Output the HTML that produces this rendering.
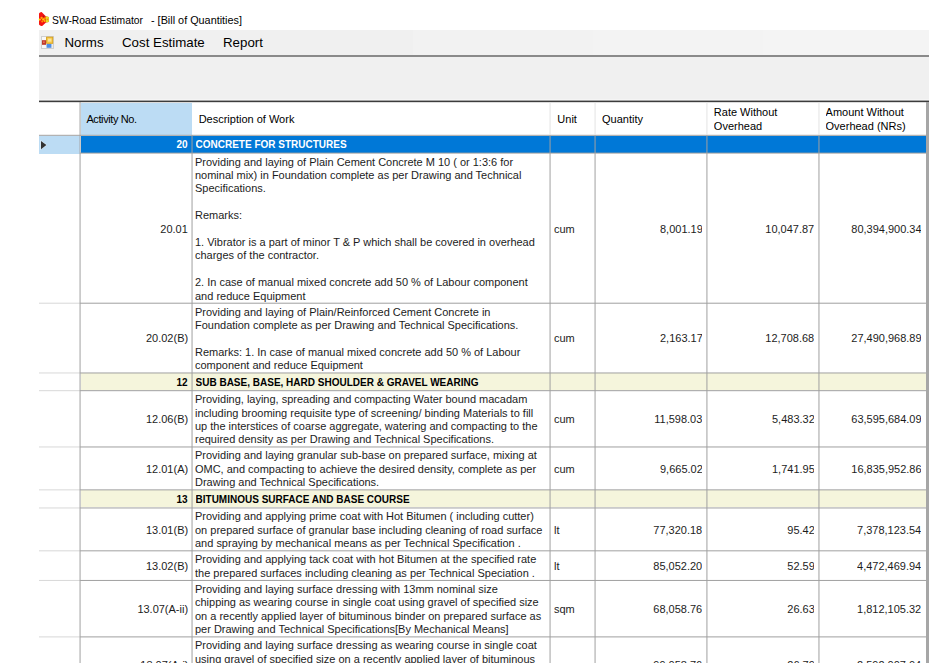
<!DOCTYPE html>
<html><head><meta charset="utf-8"><style>
html,body{margin:0;padding:0;background:#fff;}
body{width:936px;height:666px;position:relative;overflow:hidden;font-family:"Liberation Sans", sans-serif;color:#000;}
.a{position:absolute;}
.t{position:absolute;white-space:nowrap;font-size:11px;line-height:13.4px;}
.cell{position:absolute;display:flex;align-items:center;overflow:hidden;}
.r{justify-content:flex-end;}
.b{font-weight:bold;font-size:10px;padding-top:2px;box-sizing:border-box}
.s{font-size:var(--fs);line-height:13.4px;white-space:nowrap;transform:scaleX(var(--sx));transform-origin:left center;position:relative;top:var(--dy)}
.sr{transform-origin:right center}
body{--fs:11.5px;--sx:0.955;--dy:1.1px}
.s{color:#1c1c1c}
</style></head><body>

<svg class="a" style="left:37px;top:10px" width="14" height="18" viewBox="0 0 14 18">
<path d="M2 3.6 Q2.6 2 4.6 2 L8.8 6.2 L11.8 7 L11.8 12 L9 12.6 L5.2 16 Q3 16.4 2 14.6 Z" fill="#f41414"/>
<path d="M8.6 6.3 L11.8 7 L11.8 12 L8.8 12.5 Z" fill="#dce62a"/>
<rect x="9.6" y="8.6" width="1.6" height="1.6" fill="#f08a10"/>
<circle cx="2.8" cy="9.6" r="1.1" fill="#ffe000"/>
<circle cx="4.6" cy="7.8" r="1.1" fill="#ffb000"/>
<circle cx="6.4" cy="9.4" r="1.2" fill="#ffd000"/>
<circle cx="8" cy="8.2" r="0.9" fill="#ff9a00"/>
<circle cx="5.2" cy="11.6" r="1" fill="#ff9000"/>
<circle cx="7.6" cy="11" r="0.9" fill="#ffc000"/>
<circle cx="6.6" cy="6.2" r="0.8" fill="#902020"/>
</svg>
<div class="a" style="left:52.4px;top:12.5px;font-size:11.6px;line-height:14px;white-space:pre;color:#000;transform:scaleX(0.89);transform-origin:left center">SW-Road Estimator</div>
<div class="a" style="left:151.2px;top:12.5px;font-size:11.6px;line-height:14px;white-space:pre;color:#000;transform:scaleX(0.935);transform-origin:left center">- [Bill of Quantities]</div>
<div class="a" style="left:39px;top:30px;width:374px;height:25px;background:#f0f0f0"></div>
<div class="a" style="left:413px;top:30px;width:180px;height:25px;background:#f2f2f2"></div>
<div class="a" style="left:593px;top:30px;width:170px;height:25px;background:#f3f3f3"></div>
<div class="a" style="left:763px;top:30px;width:166px;height:25px;background:#f4f4f4"></div>
<div class="a" style="left:39px;top:55px;width:890px;height:2px;background:#8a8a8a"></div>
<svg class="a" style="left:41px;top:36px" width="13" height="13" viewBox="0 0 13 13">
<rect x="0.5" y="0.5" width="12" height="12" fill="#ececec" stroke="#cfcfcf" stroke-width="1"/>
<rect x="1" y="1" width="4" height="3.2" fill="#f8f8f8"/>
<rect x="1" y="4.2" width="4" height="4.6" fill="#c03a2b"/>
<rect x="2.2" y="5.4" width="1.4" height="1.6" fill="#e88070"/>
<rect x="1" y="9" width="4" height="3" fill="#f8f8f8"/>
<rect x="5.6" y="1.1" width="6.2" height="6.2" fill="#f6c847" stroke="#d49a10" stroke-width="0.8"/>
<rect x="7" y="2.6" width="3.4" height="3" fill="#fbe39a"/>
<rect x="5.6" y="8" width="4.8" height="3.8" fill="#4f8fe6"/>
</svg>
<div class="a" style="left:64.4px;top:35px;font-size:13.3px;line-height:16px;white-space:pre;color:#000">Norms</div>
<div class="a" style="left:122px;top:35px;font-size:13.3px;line-height:16px;white-space:pre;color:#000">Cost Estimate</div>
<div class="a" style="left:223px;top:35px;font-size:13.3px;line-height:16px;white-space:pre;color:#000">Report</div>
<div class="a" style="left:39px;top:57px;width:890px;height:45px;background:#f0f0f0"></div>
<div class="a" style="left:39px;top:99px;width:890px;height:1px;background:#f5f5f5"></div>
<div class="a" style="left:39px;top:100px;width:890px;height:1px;background:#a8a8a8"></div>
<div class="a" style="left:39px;top:101px;width:890px;height:1px;background:#3c3c3c"></div>
<div class="a" style="left:39px;top:102px;width:890px;height:1px;background:#dcdcdc"></div>
<div class="a" style="left:80.6px;top:102.6px;width:111.44px;height:32.2px;background:#bcdcf4"></div>
<div class="cell" style="left:86.4px;top:103px;width:100px;height:33.3px;font-size:11px;line-height:13.4px;letter-spacing:-0.4px">Activity No.</div>
<div class="cell" style="left:198.64px;top:103px;width:120px;height:33.3px;font-size:11px;line-height:13.4px;white-space:nowrap">Description of Work</div>
<div class="cell" style="left:557.36px;top:103px;width:120px;height:33.3px;font-size:11px;line-height:13.4px;white-space:nowrap">Unit</div>
<div class="cell" style="left:602.06px;top:103px;width:120px;height:33.3px;font-size:11px;line-height:13.4px;white-space:nowrap">Quantity</div>
<div class="cell" style="left:713.83px;top:103px;width:120px;height:33.3px;font-size:11px;line-height:13.4px;white-space:nowrap">Rate Without<br>Overhead</div>
<div class="cell" style="left:825.56px;top:103px;width:120px;height:33.3px;font-size:11px;line-height:13.4px;white-space:nowrap">Amount Without<br>Overhead (NRs)</div>
<div class="a" style="left:39.0px;top:135.8px;width:40.56px;height:17.8px;background:#bcdcf4"></div>
<div class="a" style="left:80.56px;top:135.8px;width:845.44px;height:16.8px;background:#0078d7"></div>
<svg class="a" style="left:40px;top:140px" width="9" height="11" viewBox="0 0 9 11"><path d="M0.3 0 L7.2 5 L0.3 10 Z" fill="#ffffff" opacity="0.55"/><path d="M1 1 L6.4 5 L1 9.2 Z" fill="#333333"/></svg>
<div class="cell r b" style="left:80.06px;top:135.8px;width:107.48px;height:16.8px;color:#fff;padding-top:0">20</div>
<div class="cell b" style="left:195.54px;top:135.8px;width:354.02px;height:16.8px;color:#fff;white-space:nowrap;padding-top:0">CONCRETE FOR STRUCTURES</div>
<div class="cell r" style="left:80.06px;top:153.6px;width:107.98px;height:149.1px"><div class="s sr">20.01</div></div>
<div class="cell" style="left:195.04px;top:153.6px;width:354.02px;height:149.1px"><div class="s">Providing and laying of Plain Cement Concrete M 10 ( or 1:3:6 for<br>nominal mix) in Foundation complete as per Drawing and Technical<br>Specifications.<br>&nbsp;<br>Remarks:<br>&nbsp;<br>1. Vibrator is a part of minor T &amp; P which shall be covered in overhead<br>charges of the contractor.<br>&nbsp;<br>2. In case of manual mixed concrete add 50 % of Labour component<br>and reduce Equipment</div></div>
<div class="cell" style="left:553.96px;top:153.6px;width:40px;height:149.1px"><div class="s">cum</div></div>
<div class="cell r" style="left:595.06px;top:153.6px;width:107.37px;height:149.1px"><div class="s sr">8,001.19</div></div>
<div class="cell r" style="left:706.93px;top:153.6px;width:107.53px;height:149.1px"><div class="s sr">10,047.87</div></div>
<div class="cell r" style="left:818.96px;top:153.6px;width:102.54px;height:149.1px"><div class="s sr">80,394,900.34</div></div>
<div class="cell r" style="left:80.06px;top:303.7px;width:107.98px;height:68.77px"><div class="s sr">20.02(B)</div></div>
<div class="cell" style="left:195.04px;top:303.7px;width:354.02px;height:68.77px"><div class="s">Providing and laying of Plain/Reinforced Cement Concrete in<br>Foundation complete as per Drawing and Technical Specifications.<br>&nbsp;<br>Remarks: 1. In case of manual mixed concrete add 50 % of Labour<br>component and reduce Equipment</div></div>
<div class="cell" style="left:553.96px;top:303.7px;width:40px;height:68.77px"><div class="s">cum</div></div>
<div class="cell r" style="left:595.06px;top:303.7px;width:107.37px;height:68.77px"><div class="s sr">2,163.17</div></div>
<div class="cell r" style="left:706.93px;top:303.7px;width:107.53px;height:68.77px"><div class="s sr">12,708.68</div></div>
<div class="cell r" style="left:818.96px;top:303.7px;width:102.54px;height:68.77px"><div class="s sr">27,490,968.89</div></div>
<div class="a" style="left:80.56px;top:373.47px;width:845.44px;height:16.71px;background:#f5f5dc"></div>
<div class="cell r b" style="left:80.06px;top:373.47px;width:107.48px;height:16.71px;color:#000;">12</div>
<div class="cell b" style="left:195.54px;top:373.47px;width:354.02px;height:16.71px;color:#000;white-space:nowrap;">SUB BASE, BASE, HARD SHOULDER &amp; GRAVEL WEARING</div>
<div class="cell r" style="left:80.06px;top:391.18px;width:107.98px;height:55.29px"><div class="s sr">12.06(B)</div></div>
<div class="cell" style="left:195.04px;top:391.18px;width:354.02px;height:55.29px"><div class="s">Providing, laying, spreading and compacting Water bound macadam<br>including brooming requisite type of screening/ binding Materials to fill<br>up the interstices of coarse aggregate, watering and compacting to the<br>required density as per Drawing and Technical Specifications.</div></div>
<div class="cell" style="left:553.96px;top:391.18px;width:40px;height:55.29px"><div class="s">cum</div></div>
<div class="cell r" style="left:595.06px;top:391.18px;width:107.37px;height:55.29px"><div class="s sr">11,598.03</div></div>
<div class="cell r" style="left:706.93px;top:391.18px;width:107.53px;height:55.29px"><div class="s sr">5,483.32</div></div>
<div class="cell r" style="left:818.96px;top:391.18px;width:102.54px;height:55.29px"><div class="s sr">63,595,684.09</div></div>
<div class="cell r" style="left:80.06px;top:447.47px;width:107.98px;height:41.89px"><div class="s sr">12.01(A)</div></div>
<div class="cell" style="left:195.04px;top:447.47px;width:354.02px;height:41.89px"><div class="s">Providing and laying granular sub-base on prepared surface, mixing at<br>OMC, and compacting to achieve the desired density, complete as per<br>Drawing and Technical Specifications.</div></div>
<div class="cell" style="left:553.96px;top:447.47px;width:40px;height:41.89px"><div class="s">cum</div></div>
<div class="cell r" style="left:595.06px;top:447.47px;width:107.37px;height:41.89px"><div class="s sr">9,665.02</div></div>
<div class="cell r" style="left:706.93px;top:447.47px;width:107.53px;height:41.89px"><div class="s sr">1,741.95</div></div>
<div class="cell r" style="left:818.96px;top:447.47px;width:102.54px;height:41.89px"><div class="s sr">16,835,952.86</div></div>
<div class="a" style="left:80.56px;top:490.36px;width:845.44px;height:17.1px;background:#f5f5dc"></div>
<div class="cell r b" style="left:80.06px;top:490.36px;width:107.48px;height:17.1px;color:#000;">13</div>
<div class="cell b" style="left:195.54px;top:490.36px;width:354.02px;height:17.1px;color:#000;white-space:nowrap;">BITUMINOUS SURFACE AND BASE COURSE</div>
<div class="cell r" style="left:80.06px;top:508.46px;width:107.98px;height:41.87px"><div class="s sr">13.01(B)</div></div>
<div class="cell" style="left:195.04px;top:508.46px;width:354.02px;height:41.87px"><div class="s">Providing and applying prime coat with Hot Bitumen ( including cutter)<br>on prepared surface of granular base including cleaning of road surface<br>and spraying by mechanical means as per Technical Specification .</div></div>
<div class="cell" style="left:553.96px;top:508.46px;width:40px;height:41.87px"><div class="s">lt</div></div>
<div class="cell r" style="left:595.06px;top:508.46px;width:107.37px;height:41.87px"><div class="s sr">77,320.18</div></div>
<div class="cell r" style="left:706.93px;top:508.46px;width:107.53px;height:41.87px"><div class="s sr">95.42</div></div>
<div class="cell r" style="left:818.96px;top:508.46px;width:102.54px;height:41.87px"><div class="s sr">7,378,123.54</div></div>
<div class="cell r" style="left:80.06px;top:551.33px;width:107.98px;height:28.61px"><div class="s sr">13.02(B)</div></div>
<div class="cell" style="left:195.04px;top:551.33px;width:354.02px;height:28.61px"><div class="s">Providing and applying tack coat with hot Bitumen at the specified rate<br>the prepared surfaces including cleaning as per Technical Speciation .</div></div>
<div class="cell" style="left:553.96px;top:551.33px;width:40px;height:28.61px"><div class="s">lt</div></div>
<div class="cell r" style="left:595.06px;top:551.33px;width:107.37px;height:28.61px"><div class="s sr">85,052.20</div></div>
<div class="cell r" style="left:706.93px;top:551.33px;width:107.53px;height:28.61px"><div class="s sr">52.59</div></div>
<div class="cell r" style="left:818.96px;top:551.33px;width:102.54px;height:28.61px"><div class="s sr">4,472,469.94</div></div>
<div class="cell r" style="left:80.06px;top:580.94px;width:107.98px;height:55.46px"><div class="s sr">13.07(A-ii)</div></div>
<div class="cell" style="left:195.04px;top:580.94px;width:354.02px;height:55.46px"><div class="s">Providing and laying surface dressing with 13mm nominal size<br>chipping as wearing course in single coat using gravel of specified size<br>on a recently applied layer of bituminous binder on prepared surface as<br>per Drawing and Technical Specifications[By Mechanical Means]</div></div>
<div class="cell" style="left:553.96px;top:580.94px;width:40px;height:55.46px"><div class="s">sqm</div></div>
<div class="cell r" style="left:595.06px;top:580.94px;width:107.37px;height:55.46px"><div class="s sr">68,058.76</div></div>
<div class="cell r" style="left:706.93px;top:580.94px;width:107.53px;height:55.46px"><div class="s sr">26.63</div></div>
<div class="cell r" style="left:818.96px;top:580.94px;width:102.54px;height:55.46px"><div class="s sr">1,812,105.32</div></div>
<div class="cell r" style="left:80.06px;top:637.4px;width:107.98px;height:55.4px"><div class="s sr">13.07(A-i)</div></div>
<div class="cell" style="left:195.04px;top:637.4px;width:354.02px;height:55.4px"><div class="s">Providing and laying surface dressing as wearing course in single coat<br>using gravel of specified size on a recently applied layer of bituminous<br>binder on prepared surface as per Drawing and Technical Specifications<br>[By Mechanical Means]</div></div>
<div class="cell" style="left:553.96px;top:637.4px;width:40px;height:55.4px"><div class="s">sqm</div></div>
<div class="cell r" style="left:595.06px;top:637.4px;width:107.37px;height:55.4px"><div class="s sr">99,058.76</div></div>
<div class="cell r" style="left:706.93px;top:637.4px;width:107.53px;height:55.4px"><div class="s sr">26.79</div></div>
<div class="cell r" style="left:818.96px;top:637.4px;width:102.54px;height:55.4px"><div class="s sr">2,592,007.04</div></div>
<svg class="a" style="left:0;top:0" width="936" height="666"><rect x="80.06" y="152.6" width="845.94" height="1" fill="#a0a0a0"/><rect x="39.0" y="302.7" width="41.06" height="1" fill="#d8d8d8"/><rect x="80.06" y="302.7" width="845.94" height="1" fill="#a0a0a0"/><rect x="39.0" y="372.47" width="41.06" height="1" fill="#d8d8d8"/><rect x="80.06" y="372.47" width="845.94" height="1" fill="#a0a0a0"/><rect x="39.0" y="390.18" width="41.06" height="1" fill="#d8d8d8"/><rect x="80.06" y="390.18" width="845.94" height="1" fill="#a0a0a0"/><rect x="39.0" y="446.47" width="41.06" height="1" fill="#d8d8d8"/><rect x="80.06" y="446.47" width="845.94" height="1" fill="#a0a0a0"/><rect x="39.0" y="489.36" width="41.06" height="1" fill="#d8d8d8"/><rect x="80.06" y="489.36" width="845.94" height="1" fill="#a0a0a0"/><rect x="39.0" y="507.46" width="41.06" height="1" fill="#d8d8d8"/><rect x="80.06" y="507.46" width="845.94" height="1" fill="#a0a0a0"/><rect x="39.0" y="550.33" width="41.06" height="1" fill="#d8d8d8"/><rect x="80.06" y="550.33" width="845.94" height="1" fill="#a0a0a0"/><rect x="39.0" y="579.94" width="41.06" height="1" fill="#d8d8d8"/><rect x="80.06" y="579.94" width="845.94" height="1" fill="#a0a0a0"/><rect x="39.0" y="636.4" width="41.06" height="1" fill="#d8d8d8"/><rect x="80.06" y="636.4" width="845.94" height="1" fill="#a0a0a0"/><rect x="39.0" y="692.8" width="41.06" height="1" fill="#d8d8d8"/><rect x="80.06" y="692.8" width="845.94" height="1" fill="#a0a0a0"/><rect x="39.0" y="134.8" width="887" height="1" fill="#a0a0a0"/><rect x="79.56" y="102" width="1" height="600" fill="#a0a0a0"/><rect x="191.54" y="135.3" width="1" height="600" fill="#a0a0a0"/><rect x="549.56" y="135.3" width="1" height="600" fill="#a0a0a0"/><rect x="594.56" y="135.3" width="1" height="600" fill="#a0a0a0"/><rect x="706.43" y="135.3" width="1" height="600" fill="#a0a0a0"/><rect x="818.46" y="135.3" width="1" height="600" fill="#a0a0a0"/><rect x="549.56" y="102.5" width="1" height="32.3" fill="#e3e3e3"/><rect x="594.56" y="102.5" width="1" height="32.3" fill="#e3e3e3"/><rect x="706.43" y="102.5" width="1" height="32.3" fill="#e3e3e3"/><rect x="818.46" y="102.5" width="1" height="32.3" fill="#e3e3e3"/></svg>
<div class="a" style="left:926px;top:102px;width:3px;height:561px;background:#a6a6a6"></div>
<div class="a" style="left:0;top:662.8px;width:936px;height:10px;background:#fff"></div>
</body></html>
